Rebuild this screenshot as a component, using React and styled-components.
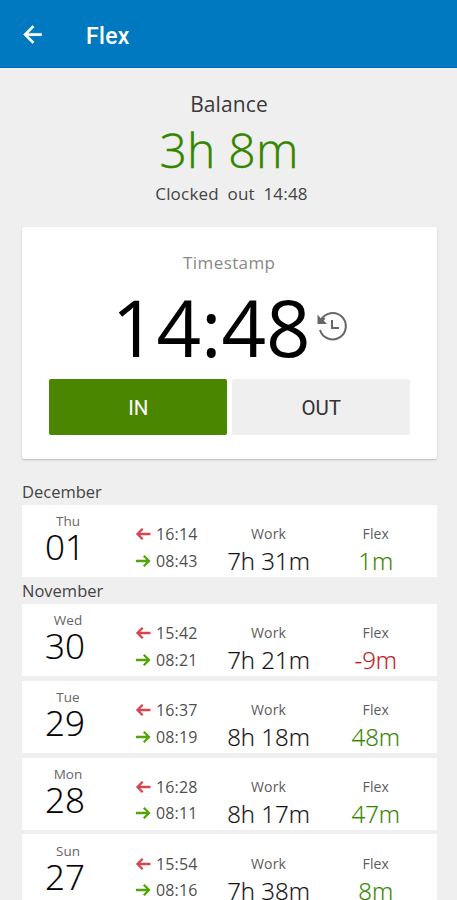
import React from "react";
import styled, { createGlobalStyle } from "styled-components";

const GlobalStyle = createGlobalStyle`
  * { box-sizing: border-box; }
  html, body { margin: 0; height: 100%; background: #efefef; overflow: hidden; }
  body { font-family: "Open Sans", "Noto Sans", sans-serif; color: #222; }
`;

const Screen = styled.main`
  width: 100%;
  height: 900px;
  overflow: hidden;
  background: #efefef;
`;

const AppBar = styled.header`
  height: 67.5px;
  display: flex;
  align-items: center;
  gap: 40px;
  padding: 2px 0 0 19px;
  background: #0079c0;
  border-bottom: 1.5px solid #0068ae;
`;

const BackButton = styled.button`
  display: flex;
  padding: 0;
  border: 0;
  background: none;
  color: #fff;
`;

const Title = styled.h1`
  margin: 0;
  padding-top: 5px;
  font: 500 23px/30px Roboto, sans-serif;
  letter-spacing: 0.3px;
  color: #fff;
`;

const Summary = styled.section`
  display: flex;
  flex-direction: column;
  align-items: center;
  height: 159.5px;
  padding-top: 21.5px;
`;

const SummaryLabel = styled.div`
  padding-left: 1px;
  font-size: 21px;
  line-height: 30px;
  letter-spacing: 0.1px;
  color: #3a3a3a;
`;

const Balance = styled.div`
  margin-top: 1px;
  padding-left: 1px;
  font-size: 48px;
  font-weight: 300;
  line-height: 60px;
  letter-spacing: 0.2px;
  -webkit-text-stroke: 0.4px currentColor;
  color: #338500;
`;

const Status = styled.div`
  margin-top: 1px;
  padding-left: 6px;
  font-size: 17px;
  line-height: 26px;
  letter-spacing: 0.2px;
  word-spacing: 4px;
  color: #444;
`;

const StampCard = styled.section`
  display: flex;
  flex-direction: column;
  align-items: center;
  width: 414.5px;
  height: 232px;
  margin-left: 22px;
  padding-top: 23px;
  border-radius: 2px;
  background: #fff;
  box-shadow: 0 1px 2px rgba(0, 0, 0, 0.22);
`;

const StampLabel = styled.div`
  font-size: 17px;
  line-height: 26px;
  letter-spacing: 0.4px;
  color: #888;
`;

const ClockRow = styled.div`
  display: flex;
  align-items: center;
  gap: 5px;
  height: 102.5px;
  padding-left: 1px;
  color: #666;

  svg { margin-top: -1px; }
`;

const Clock = styled.div`
  font-size: 78px;
  line-height: 100px;
  color: #000;
`;

const Actions = styled.div`
  display: flex;
  gap: 5px;
  padding-left: 1px;
`;

const ActionButton = styled.button`
  width: 178px;
  height: 56px;
  padding: 2px 0 0;
  border: 0;
  border-radius: 2px;
  font: 400 20.5px/24px Roboto, sans-serif;
  background: ${(p) => (p.$primary ? "#4b8600" : "#efefef")};
  color: ${(p) => (p.$primary ? "#fff" : "#333")};
`;

const Log = styled.section`
  margin: 20px 20.5px 0 22px;
`;

const Month = styled.h2`
  margin: 0;
  height: ${(p) => (p.$first ? 26 : 22.2)}px;
  padding-top: ${(p) => (p.$first ? 1 : 0)}px;
  font-size: 16.5px;
  font-weight: 400;
  line-height: ${(p) => (p.$first ? 24 : 18)}px;
  color: #444;
`;

const DayRow = styled.article`
  display: grid;
  grid-template-columns: 92px 106px 97px 117.5px;
  height: 72px;
  margin-bottom: 4.8px;
  background: #fff;
`;

const DateCell = styled.div`
  display: flex;
  flex-direction: column;
  align-items: center;
  padding-top: 7.4px;
`;

const Weekday = styled.div`
  font-size: 13.5px;
  line-height: 18px;
  color: #666;
`;

const DayNumber = styled.div`
  margin-left: -6px;
  font-size: 35px;
  font-weight: 300;
  line-height: 34px;
  -webkit-text-stroke: 0.2px currentColor;
  color: #000;
`;

const Punches = styled.div`
  padding: 16px 0 0 21px;
`;

const Punch = styled.div`
  display: flex;
  align-items: center;
  gap: 5px;
  height: 26.6px;
  font-size: 16px;
  line-height: 26px;
  letter-spacing: 0.15px;
  color: #505050;

  svg { color: ${(p) => (p.$out ? "#d64550" : "#51a40c")}; }
`;

const Metric = styled.div`
  display: flex;
  flex-direction: column;
  align-items: center;
  padding-top: 19.4px;
`;

const MetricLabel = styled.div`
  font-size: 14px;
  line-height: 20px;
  letter-spacing: 0.1px;
  color: #5c5c5c;
`;

const MetricValue = styled.div`
  font-size: 24px;
  font-weight: 300;
  line-height: 34px;
  white-space: nowrap;
  -webkit-text-stroke: 0.2px currentColor;
  color: ${(p) => p.$color || "#111"};
`;

const BackArrow = () => (
  <svg width="27" height="27" viewBox="0 0 24 24" fill="currentColor" stroke="currentColor" strokeWidth="0.5">
    <path d="M20 11H7.83l5.59-5.59L12 4l-8 8 8 8 1.41-1.41L7.83 13H20z" />
  </svg>
);

const PunchArrow = ({ left }) => (
  <svg width="16" height="14" viewBox="0 0 16 14" fill="none" stroke="currentColor" strokeWidth="2.3">
    <path d={left ? "M15.5 7H2.7M7.7 1.7L2.5 7l5.2 5.3" : "M1 7h12.8M8.8 1.7L14 7l-5.2 5.3"} />
  </svg>
);

const HistoryIcon = () => (
  <svg width="32" height="32" viewBox="0 0 32 32" fill="none" stroke="currentColor" strokeWidth="2">
    <path d="M5 9A13.2 13.2 0 1 1 4 19" />
    <path d="M1.5 3.5v9.5h9.5l-3.2-3.2 1.7-2.2-2.6-1.2-1.7 1.4z" fill="currentColor" stroke="none" />
    <path d="M16 9V17h7" />
  </svg>
);

const months = [
  { name: "December", days: [["Thu", "01", "16:14", "08:43", "7h 31m", "1m"]] },
  {
    name: "November",
    days: [
      ["Wed", "30", "15:42", "08:21", "7h 21m", "-9m"],
      ["Tue", "29", "16:37", "08:19", "8h 18m", "48m"],
      ["Mon", "28", "16:28", "08:11", "8h 17m", "47m"],
      ["Sun", "27", "15:54", "08:16", "7h 38m", "8m"],
    ],
  },
];

const Day = ({ entry: [weekday, date, out, into, work, flex] }) => (
  <DayRow>
    <DateCell>
      <Weekday>{weekday}</Weekday>
      <DayNumber>{date}</DayNumber>
    </DateCell>
    <Punches>
      <Punch $out><PunchArrow left />{out}</Punch>
      <Punch><PunchArrow />{into}</Punch>
    </Punches>
    <Metric>
      <MetricLabel>Work</MetricLabel>
      <MetricValue>{work}</MetricValue>
    </Metric>
    <Metric>
      <MetricLabel>Flex</MetricLabel>
      <MetricValue $color={flex.startsWith("-") ? "#c51616" : "#338500"}>{flex}</MetricValue>
    </Metric>
  </DayRow>
);

export default function App() {
  return (
    <Screen>
      <GlobalStyle />
      <AppBar>
        <BackButton aria-label="Back"><BackArrow /></BackButton>
        <Title>Flex</Title>
      </AppBar>
      <Summary>
        <SummaryLabel>Balance</SummaryLabel>
        <Balance>3h 8m</Balance>
        <Status>Clocked out 14:48</Status>
      </Summary>
      <StampCard>
        <StampLabel>Timestamp</StampLabel>
        <ClockRow>
          <Clock>14:48</Clock>
          <HistoryIcon />
        </ClockRow>
        <Actions>
          <ActionButton $primary>IN</ActionButton>
          <ActionButton>OUT</ActionButton>
        </Actions>
      </StampCard>
      <Log>
        {months.map((month, i) => (
          <React.Fragment key={month.name}>
            <Month $first={i === 0}>{month.name}</Month>
            {month.days.map((d) => <Day key={d[1]} entry={d} />)}
          </React.Fragment>
        ))}
      </Log>
    </Screen>
  );
}
